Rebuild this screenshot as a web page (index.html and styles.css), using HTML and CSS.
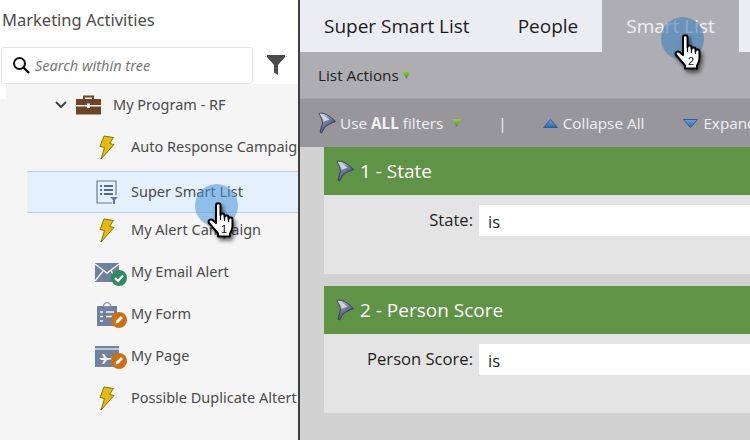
FILE: index.html
```html
<!DOCTYPE html>
<html lang="en">
  <head>
    <meta charset="UTF-8" />
    <title>Super Smart List</title>
    <link rel="stylesheet" href="styles.css">
  </head>
  <body>
    <svg class="defs" width="0" height="0">
      <defs>
        <linearGradient id="metal" x1="0" y1="0" x2="0.6" y2="1">
          <stop offset="0" stop-color="#e9eaf0" />
          <stop offset="0.45" stop-color="#8187a6" />
          <stop offset="1" stop-color="#2b3150" />
        </linearGradient>
        <linearGradient id="greenTri" x1="0" y1="0" x2="0" y2="1">
          <stop offset="0" stop-color="#9ad04a" />
          <stop offset="1" stop-color="#3f8a1e" />
        </linearGradient>
        <linearGradient id="blueTri" x1="0" y1="0" x2="0" y2="1">
          <stop offset="0" stop-color="#6aa6e0" />
          <stop offset="1" stop-color="#2a67a8" />
        </linearGradient>
        <symbol id="bolt" viewBox="0 0 16 25">
          <path d="M5 1 L14.500 2.500 L10.500 8.500 L15 9.500 L2 24 L5.500 12.500 L1 11.500 Z" fill="#e5bb0c" stroke="#85740f" stroke-width="1" stroke-linejoin="round" />
        </symbol>
        <symbol id="funnel" viewBox="0 0 18 22">
          <path d="M1 1.500 C6 0 12 4 17.500 9.500 C13 11 10 13 7 15 L3.500 21 L2 20 L4.500 11 C4 7 2.500 4 1 1.500 Z" fill="url(#metal)" stroke="#2f3550" stroke-width="0.800" />
          <path d="M3 3 C6 3 9 5.500 11.500 8 C9 8 7 9 5.500 10 C5.500 8 4.500 5 3 3 Z" fill="#cfd3e2" />
        </symbol>
        <symbol id="hand" viewBox="0 0 29 36">
          <path d="M9 3.500 C9 0.500 13.500 0.500 13.500 3.500 V13 C13.500 11 17.500 11 17.500 13.500 V15 C17.500 13 21.500 13 21.500 15.500 V17 C21.500 15 25.500 15 25.500 17.500 V24 C25.500 27.500 24 29.500 23 31.500 V34.500 H11 V31.500 C8.500 28.500 4.500 24 2 21 C0.500 18.500 3.500 16.500 5.500 18 L9 21 Z" fill="#fff" stroke="#000" stroke-width="2" stroke-linejoin="round" />
          <path d="M13.500 13 V18 M17.500 15 V19 M21.500 17 V20" stroke="#000" stroke-width="1.200" fill="none" />
        </symbol>
      </defs>
    </svg>

    <div class="app">
      <aside class="sidebar">
        <h1 class="sidebar-title">Marketing Activities</h1>
        <div class="search-row">
          <div class="search-box">
            <svg class="search-icon" viewBox="0 0 18 18" width="18" height="18">
              <circle cx="7.500" cy="7.500" r="5.500" fill="none" stroke="#111" stroke-width="2" />
              <path d="M11.500 11.500 L17 17" stroke="#111" stroke-width="2.400" />
            </svg>
            <span>Search within tree</span>
          </div>
          <svg class="filter-icon" viewBox="0 0 18 20" width="18" height="20">
            <path d="M0 0 H18 V2 L11 10 V20 L7 17.500 V10 L0 2 Z" fill="#4b4b4b" />
          </svg>
        </div>
        <div class="tree-notch"></div>
        <ul class="tree">
          <li class="tree-row program">
            <svg class="chevron" viewBox="0 0 12 8" width="12" height="8"><path d="M1 1 L6 6 L11 1" fill="none" stroke="#444" stroke-width="2" /></svg>
            <svg class="case-icon" viewBox="0 0 25 20" width="25" height="20">
              <path d="M8 4 V1.500 H17 V4" fill="none" stroke="#6d4526" stroke-width="2" />
              <path d="M0 4 H25 V10 H14 V8.500 H11 V10 H0 Z M0 11.500 H11 V13 H14 V11.500 H25 V19.500 H0 Z" fill="#6d4526" />
            </svg>
            <span class="label">My Program - RF</span>
          </li>
          <li class="tree-row tall"><span class="item-icon"><svg width="16" height="25"><use href="#bolt" /></svg></span><span class="label">Auto Response Campaign</span></li>
          <li class="tree-row selected">
            <span class="item-icon">
              <svg viewBox="0 0 22 24" width="22" height="24">
                <path d="M16 23 H1 V1 H20 V15" fill="none" stroke="#6a7a96" stroke-width="1.200" />
                <path d="M4 6 H6 M8 6 H17 M4 10 H6 M8 10 H17 M4 14 H6 M8 14 H17" stroke="#56698a" stroke-width="2" />
                <path d="M14 17 H22 L19 20 V24 H17 V20 Z" fill="#6a7a96" />
              </svg>
            </span>
            <span class="label">Super Smart List</span>
          </li>
          <li class="tree-row after-selected"><span class="item-icon"><svg width="16" height="25"><use href="#bolt" /></svg></span><span class="label">My Alert Campaign</span></li>
          <li class="tree-row">
            <span class="item-icon">
              <svg viewBox="0 0 24 19" width="24" height="19">
                <rect width="24" height="19" fill="#6f819d" />
                <path d="M0 1 L12 10 L24 1 M0 18 L8 8 M24 18 L16 8" fill="none" stroke="#f5f5f5" stroke-width="1.400" />
              </svg>
              <svg class="badge low" viewBox="0 0 16 16" width="16" height="16">
                <circle cx="8" cy="8" r="8" fill="#2f8a63" />
                <path d="M4 8 L7 11 L12 5.500" fill="none" stroke="#fff" stroke-width="2.200" />
              </svg>
            </span>
            <span class="label">My Email Alert</span>
          </li>
          <li class="tree-row">
            <span class="item-icon">
              <svg viewBox="0 0 20 24" width="20" height="24">
                <path d="M0 4 H6 C6 -1 14 -1 14 4 H20 V24 H0 Z" fill="#6f819d" />
                <path d="M8 3.500 C8 1.500 12 1.500 12 3.500 Z M3 10 H6 M9 10 H17 M3 14.500 H6 M9 14.500 H15 M3 19 H6" stroke="#f5f5f5" stroke-width="1.500" fill="#f5f5f5" />
              </svg>
              <svg class="badge" viewBox="0 0 16 16" width="16" height="16">
                <circle cx="8" cy="8" r="8" fill="#cb6f10" />
                <path d="M4.500 11.500 L5 9 L10 4 L12 6 L7 11 Z" fill="#fff" />
              </svg>
            </span>
            <span class="label">My Form</span>
          </li>
          <li class="tree-row">
            <span class="item-icon">
              <svg viewBox="0 0 24 21" width="24" height="21">
                <rect width="24" height="21" fill="#6f819d" />
                <path d="M0 3 H24" stroke="#f5f5f5" stroke-width="1.200" />
                <path d="M4 12 H9 L7 8 H9 L12 12 H17 L18 13 L12 14 L9 18 H7 L9 14 H6 Z" fill="#f5f5f5" />
              </svg>
              <svg class="badge" viewBox="0 0 16 16" width="16" height="16">
                <circle cx="8" cy="8" r="8" fill="#cb6f10" />
                <path d="M4.500 11.500 L5 9 L10 4 L12 6 L7 11 Z" fill="#fff" />
              </svg>
            </span>
            <span class="label">My Page</span>
          </li>
          <li class="tree-row"><span class="item-icon"><svg width="16" height="25"><use href="#bolt" /></svg></span><span class="label">Possible Duplicate Altert</span></li>
        </ul>
      </aside>

      <main class="main">
        <nav class="tabs">
          <div class="tab">Super Smart List</div>
          <div class="tab">People</div>
          <div class="tab active">Smart List</div>
        </nav>
        <div class="list-actions">
          <span>List Actions</span>
          <svg class="tri" width="9" height="8"><path d="M0 0 H9 L4.500 8 Z" fill="url(#greenTri)" /></svg>
        </div>
        <div class="filter-bar">
          <span class="filter-mode">
            <svg class="funnel" width="18" height="22"><use href="#funnel" /></svg>
            <span>Use <b>ALL</b> filters</span>
            <svg class="tri mode-tri" width="9" height="8"><path d="M0 0 H9 L4.500 8 Z" fill="url(#greenTri)" /></svg>
          </span>
          <span class="sep">|</span>
          <span class="bar-btn">
            <svg width="15" height="9"><path d="M0.500 8.500 H14.500 L7.500 0.500 Z" fill="url(#blueTri)" stroke="#2a5f9c" /></svg>
            Collapse All
          </span>
          <span class="bar-btn">
            <svg width="15" height="9"><path d="M0.500 0.500 H14.500 L7.500 8.500 Z" fill="url(#blueTri)" stroke="#2a5f9c" /></svg>
            Expand All
          </span>
        </div>
        <div class="filters">
          <section class="card">
            <header class="card-head">
              <svg class="funnel" width="18" height="22"><use href="#funnel" /></svg>
              <span>1 - State</span>
            </header>
            <div class="card-body">
              <label class="field-label">State:</label>
              <div class="field-value">is</div>
            </div>
          </section>
          <section class="card">
            <header class="card-head">
              <svg class="funnel" width="18" height="22"><use href="#funnel" /></svg>
              <span>2 - Person Score</span>
            </header>
            <div class="card-body">
              <label class="field-label">Person Score:</label>
              <div class="field-value">is</div>
            </div>
          </section>
        </div>
      </main>

      <div class="spot spot-one"></div>
      <svg class="pointer pointer-one" viewBox="0 0 29 36" width="29" height="36">
        <use href="#hand" />
        <text x="17" y="31" text-anchor="middle">1</text>
      </svg>
      <div class="spot spot-two"></div>
      <svg class="pointer pointer-two" viewBox="0 0 29 36" width="29" height="36">
        <use href="#hand" />
        <text x="17" y="31" text-anchor="middle">2</text>
      </svg>
    </div>
  </body>
</html>
```
FILE: styles.css
```css
* {
  box-sizing: border-box;
}
body {
  margin: 0;
  width: 750px;
  height: 440px;
  overflow: hidden;
  background: #fff;
}
.defs {
  position: absolute;
}
.app {
  position: relative;
  display: flex;
  width: 750px;
  height: 440px;
  overflow: hidden;
}

/* left tree */
.sidebar {
  width: 300px;
  flex: none;
  display: flex;
  flex-direction: column;
  overflow: hidden;
  border-right: 2px solid #3f3f3f;
  font-family: "Noto Sans", sans-serif;
  color: #4b4b4b;
}
.sidebar-title {
  flex: none;
  margin: 0;
  padding: 9px 0 0 2px;
  height: 46px;
  font-size: 16.500px;
  line-height: 22px;
  font-weight: 400;
}
.search-row {
  display: flex;
  align-items: center;
  height: 38px;
  flex: none;
}
.search-box {
  display: flex;
  align-items: center;
  gap: 5px;
  width: 252px;
  height: 37px;
  margin-left: 1px;
  padding-left: 10px;
  background: #fff;
  border: 1px solid #e4e4e4;
  border-radius: 3px;
  font-size: 14.500px;
  font-style: italic;
  color: #777;
}
.filter-icon {
  margin-left: 14px;
}
.tree-notch {
  height: 15px;
  margin-left: 6px;
  background: #f5f5f5;
  flex: none;
}
.tree {
  list-style: none;
  margin: 0;
  padding: 0;
  flex: 1;
  background: #f5f5f5;
}
.tree-row {
  display: flex;
  align-items: center;
  height: 42px;
  padding-left: 95px;
  font-size: 14.500px;
  white-space: nowrap;
}
.program {
  height: 12px;
  margin-bottom: 12px;
  padding-left: 55px;
}
.tall {
  height: 48px;
}
.after-selected {
  height: 38px;
  padding-bottom: 4px;
}
.chevron {
  margin-right: 9px;
}
.case-icon {
  margin-right: 12px;
}
.item-icon {
  position: relative;
  display: flex;
  justify-content: center;
  flex: none;
  width: 24px;
  margin-right: 12px;
}
.label {
  flex: none;
  margin-top: -2px;
}
.badge {
  position: absolute;
  left: 16px;
  bottom: -2px;
}
.badge.low {
  bottom: -4px;
}
.selected {
  margin-left: 27px;
  padding-left: 68px;
  background: #e5f0fd;
  border-top: 1px solid #b4d0f0;
  border-bottom: 1px solid #b4d0f0;
}

/* right panel */
.main {
  flex: 1;
  min-width: 0;
  display: flex;
  flex-direction: column;
  background: #d2d2d2;
  font-family: "Open Sans", sans-serif;
}
.tabs {
  display: flex;
  height: 52px;
  flex: none;
  padding-left: 24px;
  background: #ecedf3;
  font-size: 19px;
  color: #1c1c1c;
}
.tab {
  line-height: 52px;
  margin-right: 48px;
}
.tab.active {
  margin: 0 0 0 -24px;
  padding: 0 24px;
  background: #aeadb1;
  color: #f1f1f1;
}
.list-actions {
  display: flex;
  align-items: center;
  gap: 3px;
  height: 47px;
  flex: none;
  padding-left: 18px;
  background: #aeadb1;
  border-bottom: 1px solid #a2a1a6;
  font-size: 15.300px;
  color: #1f1f1f;
}
.filter-bar {
  display: flex;
  align-items: center;
  height: 48px;
  flex: none;
  padding-left: 18px;
  background: #97969b;
  font-size: 15.300px;
  color: #f1f1f1;
  white-space: nowrap;
}
.filter-mode {
  display: flex;
  align-items: center;
  gap: 4px;
}
.mode-tri {
  margin-left: 5px;
}
.sep {
  margin-left: 37px;
  margin-right: -1px;
}
.bar-btn {
  display: flex;
  align-items: center;
  gap: 5px;
  margin-left: 37px;
}
.bar-btn + .bar-btn {
  margin-left: 39px;
}
.filters {
  display: flex;
  flex-direction: column;
  gap: 12px;
  padding-left: 24px;
}
.card-head {
  display: flex;
  align-items: center;
  gap: 6px;
  height: 48px;
  padding-left: 12px;
  background: #5f9346;
  font-size: 19px;
  color: #fff;
}
.card-body {
  display: flex;
  height: 79px;
  padding-top: 10px;
  background: #e4e4e4;
  font-size: 16.600px;
  color: #1f1f1f;
}
.field-label {
  width: 149px;
  text-align: right;
  line-height: 30px;
}
.field-value {
  flex: 1;
  height: 31px;
  margin-left: 6px;
  padding-left: 9px;
  background: #fff;
  line-height: 34px;
}

/* click markers */
.spot {
  position: absolute;
  width: 43px;
  height: 43px;
  border-radius: 50%;
  background: rgba(72, 150, 215, 0.55);
}
.spot-one {
  left: 195px;
  top: 184px;
}
.spot-two {
  left: 661px;
  top: 17px;
  background: rgba(60, 130, 190, 0.6);
}
.pointer {
  position: absolute;
  filter: drop-shadow(2px 3px 2px rgba(0, 0, 0, 0.6));
  font-family: "Liberation Sans", sans-serif;
  font-size: 11px;
}
.pointer-one {
  left: 207px;
  top: 202px;
}
.pointer-two {
  left: 674px;
  top: 34px;
}
```
